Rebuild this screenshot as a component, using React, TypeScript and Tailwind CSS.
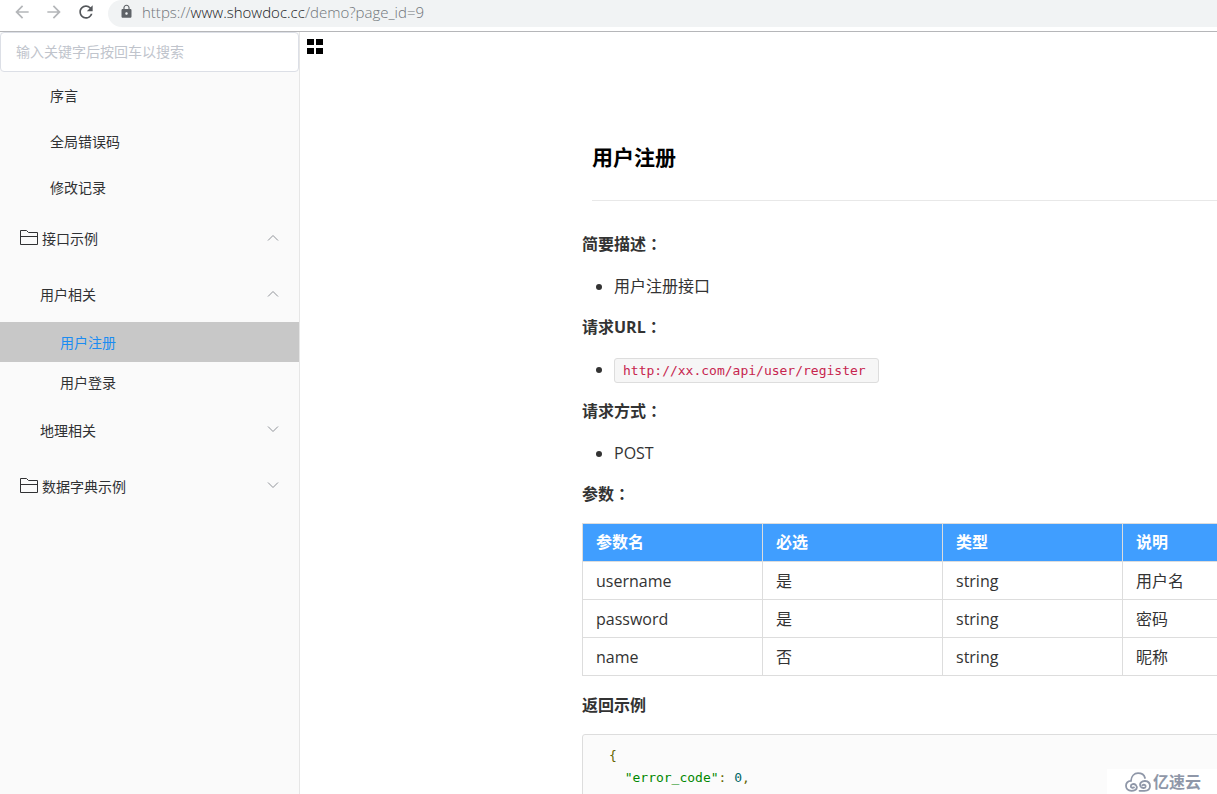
import React, {useState} from "react";
import {MdArrowBack, MdArrowForward, MdLock, MdRefresh} from "react-icons/md";
import clsx from "clsx";

interface Param {
    name: string;
    required: string;
    type: string;
    desc: string;
}

const topPages = ["序言", "全局错误码", "修改记录"];

const userPages = ["用户注册", "用户登录"];

const params: Param[] = [
    {name: "username", required: "是", type: "string", desc: "用户名"},
    {name: "password", required: "是", type: "string", desc: "密码"},
    {name: "name", required: "否", type: "string", desc: "昵称"},
];

const Chevron: React.FC<{ open: boolean }> = ({open}) => (
    <svg viewBox="0 0 12 12" className="w-3 h-3 shrink-0" fill="none" stroke="#909399" aria-hidden="true">
        <path d={open ? "M1 8.5 L6 3.5 L11 8.5" : "M1 2.5 L6 7.5 L11 2.5"}/>
    </svg>
);

const FolderIcon = () => (
    <svg viewBox="0 0 18 16" className="w-[18px] h-4 shrink-0" fill="none" stroke="#303133" aria-hidden="true">
        <path d="M0.5 14.5 V0.5 H6.5 L8.5 2.5 H17.5 V14.5 Z M0.5 6.5 H17.5"/>
    </svg>
);

const BrowserBar = () => (
    <header className="flex items-start h-8 shrink-0 border-b border-[#b5b6b9] bg-white">
        <div className="flex items-center gap-3 pl-3 h-6 w-[108px] shrink-0">
            <button type="button" aria-label="Back"><MdArrowBack className="w-5 h-5 text-[#b4b6b9]"/></button>
            <button type="button" aria-label="Forward"><MdArrowForward className="w-5 h-5 text-[#b4b6b9]"/></button>
            <button type="button" aria-label="Reload"><MdRefresh className="w-5 h-5 text-[#54575b]"/></button>
        </div>
        <div className="flex items-center gap-2 grow h-[27px] pl-[11px] pb-1 rounded-l-full bg-[#f1f3f4]">
            <MdLock className="w-[15px] h-[15px] text-[#5f6368]"/>
            <p className="text-[15px] leading-5 font-light text-[#70757a] whitespace-nowrap">
                https://<span className="text-[#202124]">www.showdoc.cc</span>/demo?page_id=9
            </p>
        </div>
    </header>
);

interface FolderRowProps {
    label: string;
    open: boolean;
    root?: boolean;
    onClick: () => void;
}

const FolderRow: React.FC<FolderRowProps> = ({label, open, root, onClick}) => (
    <button
        type="button"
        aria-expanded={open}
        onClick={onClick}
        className={clsx("flex items-center w-full h-14 pr-5", root ? "pl-5 gap-1" : "pl-10")}
    >
        {root && <FolderIcon/>}
        <span className="grow pt-[2px] text-left">{label}</span>
        <Chevron open={open}/>
    </button>
);

const Sidebar = () => {
    const [current, setCurrent] = useState("用户注册");
    const [opened, setOpened] = useState<string[]>(["接口示例", "用户相关"]);

    const isOpen = (key: string) => opened.includes(key);
    const toggle = (key: string) => {
        setOpened(isOpen(key) ? opened.filter((k) => k !== key) : [...opened, key]);
    };

    return (
        <aside className="w-[300px] shrink-0 bg-[#fafafa] border-r border-[#e6e6e6] text-sm text-[#303133]">
            <input
                type="search"
                aria-label="搜索"
                placeholder="输入关键字后按回车以搜索"
                className="block w-full h-10 px-[15px] pb-[2px] bg-white border border-[#dcdfe6] rounded placeholder:text-[#c0c4cc] focus:outline-none"
            />
            <nav>
                {topPages.map((page) => (
                    <a key={page} href="#" className="flex items-center h-[46px] pl-[50px] pt-[2px]">{page}</a>
                ))}
                <FolderRow root label="接口示例" open={isOpen("接口示例")} onClick={() => toggle("接口示例")}/>
                {isOpen("接口示例") && (
                    <>
                        <FolderRow label="用户相关" open={isOpen("用户相关")} onClick={() => toggle("用户相关")}/>
                        {isOpen("用户相关") && userPages.map((page) => (
                            <a
                                key={page}
                                href="#"
                                onClick={() => setCurrent(page)}
                                className={clsx(
                                    "flex items-center h-10 pl-[60px] pt-[2px]",
                                    page === current && "bg-[#c8c8c8] text-[#1b8cf2]"
                                )}
                            >
                                {page}
                            </a>
                        ))}
                        <FolderRow label="地理相关" open={isOpen("地理相关")} onClick={() => toggle("地理相关")}/>
                    </>
                )}
                <FolderRow root label="数据字典示例" open={isOpen("数据字典示例")} onClick={() => toggle("数据字典示例")}/>
            </nav>
        </aside>
    );
};

// the TC face centres the full-width colon in its box
const Label: React.FC<{ text: string; colon?: boolean }> = ({text, colon}) => (
    <p className="mb-4 leading-[25px] font-bold">
        {text}
        {colon && <span lang="zh-TW" className="font-['Noto_Sans_CJK_TC',sans-serif] leading-none">：</span>}
    </p>
);

const Bullet: React.FC<{ children: React.ReactNode }> = ({children}) => (
    <ul className="mb-4 pl-8 list-disc leading-[26px]">
        <li>{children}</li>
    </ul>
);

const ParamTable = () => (
    <table className="w-full table-fixed border-collapse mb-[17px] text-left leading-[25px]">
        <thead>
        <tr className="bg-[#409eff] text-white">
            {["参数名", "必选", "类型", "说明"].map((head) => (
                <th key={head} className="h-[38px] px-[13px] py-0 border border-[#dddddd] font-bold">{head}</th>
            ))}
        </tr>
        </thead>
        <tbody>
        {params.map((param) => (
            <tr key={param.name}>
                {[param.name, param.required, param.type, param.desc].map((value, i) => (
                    <td key={i} className="h-[38px] px-[13px] pt-[2px] pb-0 border border-[#dddddd]">{value}</td>
                ))}
            </tr>
        ))}
        </tbody>
    </table>
);

const Watermark = () => (
    <div className="absolute right-0 bottom-0 flex items-center gap-[2px] h-[25px] pl-[18px] pr-4 bg-white text-[#8f97a8]">
        <svg viewBox="0 0 26 20" className="w-[26px] h-5" fill="none" stroke="currentColor" strokeWidth="1.8" strokeLinecap="round" aria-hidden="true">
            <path d="M9 15.4 C7.6 16.2 5.8 15.6 5.8 14.2 C5.8 12 9 11.2 10.8 13 C13 15.3 12 18.8 6.5 18.8 C3 18.8 1 16.5 1 13.8 C1 11 3 9 6 8.8 C6.3 4.2 9.3 1.2 13 1.2 C16.5 1.2 19.3 3.3 20 6"/>
            <path d="M17.4 13.2 C18.8 12.2 20.9 13 20.6 14.7 C20.1 16.6 16.6 16.4 15.5 14.3 C14 11 17 8.9 20 9 C23 9.2 25 11.2 25 14 C25 17 22.8 18.8 19.5 18.8 H14.5"/>
        </svg>
        <span className="text-base leading-5 font-bold">亿速云</span>
    </div>
);

const App = () => (
    <div
        className="relative flex flex-col h-screen overflow-hidden bg-white text-[#333333] font-['Open_Sans','Noto_Sans_CJK_SC',sans-serif]">
        <BrowserBar/>
        <div className="flex grow min-h-0">
            <Sidebar/>
            <main className="grow min-w-0 overflow-hidden">
                <button type="button" aria-label="菜单" className="block mt-[7px] ml-[7px]">
                    <svg viewBox="0 0 16 15" className="w-4 h-[15px]" fill="#000000">
                        <path d="M0 0h7v6H0zM9 0h7v6H9zM0 9h7v6H0zM9 9h7v6H9z"/>
                    </svg>
                </button>
                <article className="min-w-[1003px] pl-[282px] pt-[83px]">
                    <h1 className="ml-[10px] mb-[31px] pb-[23px] border-b border-[#e8e8e8] text-[21px] leading-10 font-bold text-black">
                        用户注册
                    </h1>
                    <Label text="简要描述" colon/>
                    <Bullet>用户注册接口</Bullet>
                    <Label text="请求URL" colon/>
                    <Bullet>
                        <code
                            className="inline-block pl-2 pr-3 bg-[#f6f6f6] border border-[#dddddd] rounded-[3px] font-['DejaVu_Sans_Mono',monospace] text-[13px] leading-[23px] text-[#c7254e]">
                            http://xx.com/api/user/register
                        </code>
                    </Bullet>
                    <Label text="请求方式" colon/>
                    <Bullet>POST</Bullet>
                    <Label text="参数" colon/>
                    <ParamTable/>
                    <Label text="返回示例"/>
                    <pre
                        className="px-[26px] py-[10px] bg-[#fbfbfb] border border-[#dddddd] rounded-[3px] font-['DejaVu_Sans_Mono',monospace] text-[13px] leading-[22px] text-[#666600]">
                        {"{\n  "}
                        <span className="text-[#008800]">"error_code"</span>
                        {": "}
                        <span className="text-[#006666]">0</span>
                        {",\n"}
                    </pre>
                </article>
            </main>
        </div>
        <Watermark/>
    </div>
);

export default App;
